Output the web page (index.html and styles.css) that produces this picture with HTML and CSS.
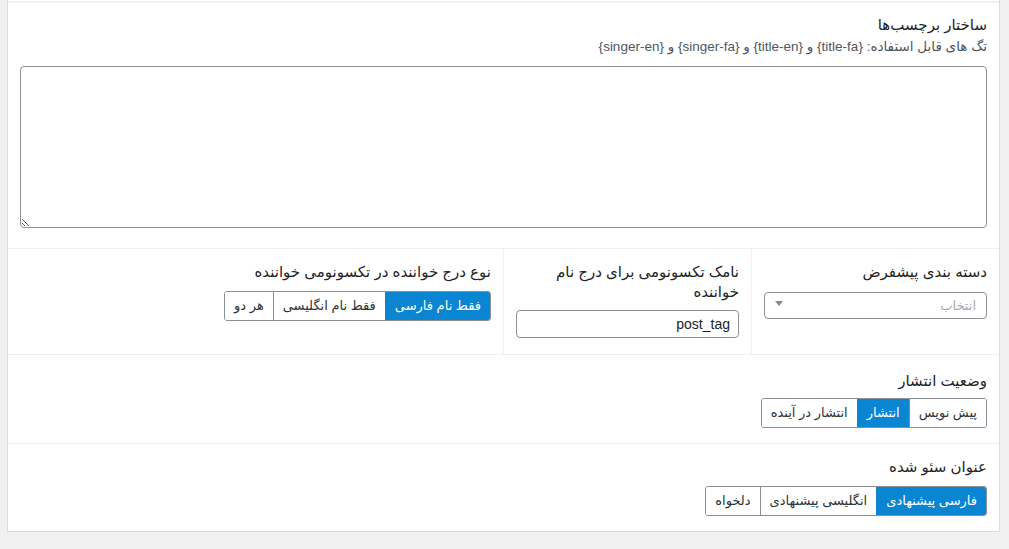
FILE: index.html
```html
<!DOCTYPE html>
<html lang="fa" dir="rtl">
<head>
<meta charset="utf-8">
<link rel="stylesheet" href="styles.css">
</head>
<body>
<div class="panel">
  <div class="row row-tags">
    <div class="label">ساختار برچسب‌ها</div>
    <div class="desc">تگ های قابل استفاده: {title-fa} و {title-en} و {singer-fa} و {singer-en}</div>
    <textarea class="area"></textarea>
  </div>
  <div class="row row-grid">
    <div class="col col-a">
      <div class="label">دسته بندی پیشفرض</div>
      <div class="select">
        <span class="placeholder">انتخاب</span>
        <span class="arrow"></span>
      </div>
    </div>
    <div class="col col-b">
      <div class="label">نامک تکسونومی برای درج نام خواننده</div>
      <input class="input" type="text" value="post_tag">
    </div>
    <div class="col col-c">
      <div class="label">نوع درج خواننده در تکسونومی خواننده</div>
      <div class="group">
        <span class="btn active">فقط نام فارسی</span>
        <span class="btn">فقط نام انگلیسی</span>
        <span class="btn">هر دو</span>
      </div>
    </div>
  </div>
  <div class="row row-status">
    <div class="label">وضعیت انتشار</div>
    <div class="group">
      <span class="btn">پیش نویس</span>
      <span class="btn active">انتشار</span>
      <span class="btn">انتشار در آینده</span>
    </div>
  </div>
  <div class="row row-seo">
    <div class="label">عنوان سئو شده</div>
    <div class="group">
      <span class="btn active">فارسی پیشنهادی</span>
      <span class="btn">انگلیسی پیشنهادی</span>
      <span class="btn">دلخواه</span>
    </div>
  </div>
</div>
</body>
</html>
```

FILE: styles.css
```css
html, body {
  margin: 0;
  padding: 0;
  background: #f0f0f1;
}
body {
  font-family: "Liberation Sans", "DejaVu Sans", sans-serif;
  color: #1d2327;
  direction: rtl;
}
.panel {
  margin: 0 9px 0 7px;
  background: #fff;
  border: 1px solid #dcdcde;
  border-top: 0;
  padding-top: 1px;
}
.row {
  border-top: 2px solid #f0f0f1;
}
.row + .row {
  border-top: 1px solid #f0f0f1;
}
.label {
  font-size: 15px;
  line-height: 20px;
  color: #1d2327;
}
.desc {
  font-size: 13.5px;
  line-height: 18px;
  color: #50575e;
  margin-top: 3px;
}
.row-tags {
  padding: 12px 12px 20px 12px;
}
.area {
  display: block;
  box-sizing: border-box;
  width: 100%;
  height: 162px;
  margin-top: 10px;
  border: 1px solid #8c8f94;
  border-radius: 4px;
  direction: rtl;
  background: #fff;
}
.row-grid {
  display: grid;
  grid-template-columns: 248px 248px 1fr;
}
.col {
  padding: 13px 12px 16px 12px;
}
.col-a, .col-b {
  border-left: 1px solid #f0f0f1;
}
.col-a .label {
  margin-bottom: 10px;
}
.col-b .label {
  margin-bottom: 8px;
}
.col-c .label {
  margin-bottom: 9px;
}
.select {
  display: flex;
  align-items: center;
  justify-content: space-between;
  box-sizing: border-box;
  height: 27px;
  border: 1px solid #8c8f94;
  border-radius: 4px;
  padding: 0 10px 0 10px;
}
.placeholder {
  font-size: 13px;
  color: #a7aaad;
}
.arrow {
  width: 0;
  height: 0;
  border-left: 4px solid transparent;
  border-right: 4px solid transparent;
  border-top: 5px solid #888;
  margin-bottom: 4px;
}
.input {
  display: block;
  box-sizing: border-box;
  width: 100%;
  height: 28px;
  border: 1px solid #8c8f94;
  border-radius: 4px;
  padding: 0 8px;
  font-family: "Liberation Sans", sans-serif;
  font-size: 14px;
  color: #1d2327;
  direction: rtl;
  text-align: right;
}
.group {
  display: inline-flex;
  border: 1px solid #8c8f94;
  border-radius: 3px;
  overflow: hidden;
}
.btn {
  font-size: 13px;
  line-height: 28px;
  padding: 0 9px;
  color: #2c3338;
  background: #fff;
  border-left: 1px solid #8c8f94;
  white-space: nowrap;
}
.btn:last-child {
  border-left: 0;
}
.btn.active {
  background: #0a85d1;
  color: #fff;
  border-left-color: #0a85d1;
}
.row-status {
  padding: 16px 12px 15px 12px;
}
.row-status .label {
  margin-bottom: 7px;
}
.row-seo {
  padding: 13px 12px 15px 12px;
}
.row-seo .label {
  margin-bottom: 9px;
}
```
